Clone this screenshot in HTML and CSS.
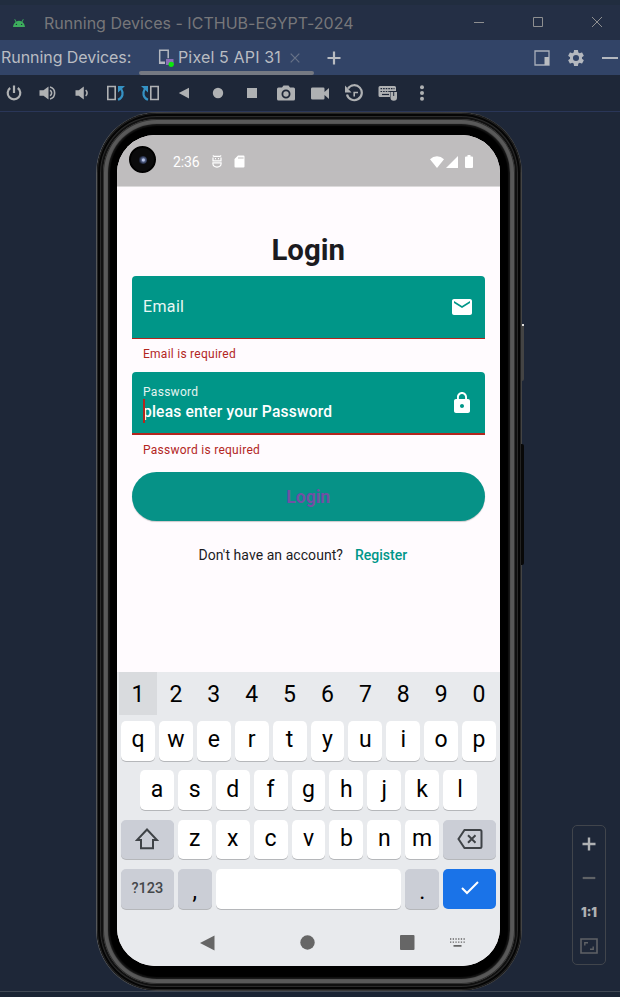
FILE: index.html
```html
<!DOCTYPE html>
<html lang="en">
<head>
<meta charset="utf-8">
<title>Running Devices</title>
<link rel="stylesheet" href="styles.css">
</head>
<body>
<div class="window">
  <header class="titlebar">
    <svg class="android" width="12" height="8" viewBox="0 0 12 8"><path fill="#3dae5d" d="M0 8C.2 5.700 1.200 4 2.600 3L1.300.5 2 .1l1.400 2.400a6 6 0 0 1 5.200 0L10 .1l.7.4L9.400 3C10.800 4 11.800 5.700 12 8z"/><circle cx="3.400" cy="5.400" r=".7" fill="#242f45"/><circle cx="8.600" cy="5.400" r=".7" fill="#242f45"/></svg>
    <span class="title">Running Devices - ICTHUB-EGYPT-2024</span>
    <div class="winbtns">
      <svg width="12" height="12" viewBox="0 0 12 12"><path d="M1 6.500h10"/></svg>
      <svg width="12" height="12" viewBox="0 0 12 12"><path d="M1.500 1.500h9v9h-9z"/></svg>
      <svg width="12" height="12" viewBox="0 0 12 12"><path d="M1 1l10 10M11 1L1 11"/></svg>
    </div>
  </header>

  <nav class="tabs">
    <span class="tabs-label">Running Devices:</span>
    <div class="tab">
      <svg width="16" height="18" viewBox="0 0 16 18"><path fill="none" stroke="#b4b8c0" stroke-width="1.500" d="M7 14.200H1.700V1.200h8.500v8"/><path fill="#b4b8c0" d="M1 12.500h6V15H1z"/><path fill="#8a6fb5" d="M8 10h7.500v6H8z"/><circle cx="13.200" cy="15.300" r="2.600" fill="#0be80b"/></svg>
      <span class="tab-name">Pixel 5 API 31</span>
      <svg class="tab-x" width="10" height="10" viewBox="0 0 10 10"><path d="M.7.7l8.600 8.600M9.300.7L.7 9.300"/></svg>
    </div>
    <svg class="plus" width="14" height="14" viewBox="0 0 14 14"><path d="M7 .5v13M.5 7h13"/></svg>
    <div class="tab-tools">
      <svg width="16" height="16" viewBox="0 0 16 16"><path fill="none" stroke="#a9afba" stroke-width="1.300" d="M1 1h14v14H1z"/><path fill="#b9bcc1" d="M10.500 7H15v8h-4.500z"/></svg>
      <svg width="16" height="16" viewBox="2 2 20 20"><path fill="#b4b8bf" d="M19.430 12.980c.04-.32.070-.64.070-.98s-.03-.66-.07-.98l2.110-1.650c.19-.15.240-.42.120-.64l-2-3.460c-.12-.22-.39-.3-.61-.22l-2.490 1c-.52-.4-1.080-.73-1.690-.98l-.38-2.650A.49.490 0 0 0 14 2h-4c-.25 0-.46.180-.49.420l-.38 2.650c-.61.250-1.170.590-1.690.98l-2.490-1c-.23-.09-.49 0-.61.220l-2 3.460c-.13.220-.07.490.120.640l2.110 1.650c-.04.320-.07.650-.07.980s.03.660.070.980l-2.110 1.650c-.19.150-.24.420-.12.640l2 3.460c.12.220.39.300.61.220l2.490-1c.52.400 1.080.730 1.690.980l.38 2.650c.03.240.24.420.49.420h4c.25 0 .46-.18.490-.42l.38-2.650c.61-.25 1.170-.59 1.690-.98l2.490 1c.23.090.49 0 .61-.22l2-3.460c.12-.22.070-.49-.12-.64zM12 15.800a3.800 3.800 0 1 1 0-7.600 3.800 3.800 0 0 1 0 7.600z"/></svg>
      <svg width="16" height="16" viewBox="0 0 16 16"><path stroke="#b4b8bf" stroke-width="2" d="M0 8h16"/></svg>
    </div>
  </nav>

  <div class="toolbar">
    <i><svg width="18" height="18" viewBox="0 0 18 18"><path class="ln" d="M9 1.500v7.500M5.200 4A6.300 6.300 0 1 0 12.800 4"/></svg></i>
    <i><svg width="18" height="18" viewBox="0 0 18 18"><path class="fl" d="M.5 6.200H4.500L9.500 2.500v13L4.500 11.800h-4z"/><path class="ln th" d="M11 6.200a3.200 3.200 0 0 1 0 5.600M11 3a6.200 6.200 0 0 1 0 12"/></svg></i>
    <i><svg width="18" height="18" viewBox="0 0 18 18"><path class="fl" d="M2.500 6.200h3.300l5-3.700v13l-5-3.700H2.500z"/><path class="ln th" d="M12.600 6.200a3.400 3.400 0 0 1 0 5.600"/></svg></i>
    <i><svg width="18" height="18" viewBox="0 0 18 18"><path class="ln th" d="M.8 2.500h7.400v13H.8z"/><path class="ln blue" d="M11 15.700c5.300-2 5.500-7 3-11.200"/><path fill="#3592c4" d="M11 2h7l-7 6.500z"/></svg></i>
    <i><svg width="18" height="18" viewBox="0 0 18 18"><path class="ln th" d="M9.800 2.500h7.400v13H9.800z"/><path class="ln blue" d="M7 15.700c-5.300-2-5.500-7-3-11.200"/><path fill="#3592c4" d="M7 2H0l7 6.500z"/></svg></i>
    <i><svg width="18" height="18" viewBox="0 0 18 18"><path class="fl" d="M14 3.800v10.600L3.800 9.100z"/></svg></i>
    <i><svg width="18" height="18" viewBox="0 0 18 18"><circle class="fl" cx="9" cy="9" r="5.200"/></svg></i>
    <i><svg width="18" height="18" viewBox="0 0 18 18"><path class="fl" d="M4 4h10v10H4z"/></svg></i>
    <i><svg width="18" height="18" viewBox="0 0 18 18"><path class="fl" fill-rule="evenodd" d="M6.500 1.500h5L13 3.500h3.500a1.500 1.500 0 0 1 1.500 1.500v10a1.500 1.500 0 0 1-1.500 1.500h-15A1.500 1.500 0 0 1 0 15V5a1.500 1.500 0 0 1 1.500-1.500H5zM9 5.500a4.500 4.500 0 1 0 0 9 4.500 4.500 0 0 0 0-9z"/><circle class="fl" cx="9" cy="10" r="2.700"/></svg></i>
    <i><svg width="18" height="18" viewBox="0 0 18 18"><path class="fl" d="M1.500 3.500h10.800q1.200 0 1.200 1.200V8L18 4v11l-4.500-4v3.300q0 1.200-1.200 1.200H1.500q-1.500 0-1.500-1.200V4.700q0-1.200 1.500-1.200z"/></svg></i>
    <i><svg width="18" height="18" viewBox="0 0 18 18"><path class="ln" d="M3 4.600A7.500 7.500 0 1 1 2 10.500"/><path class="fl" d="M0 1.500v7h6.500z"/><path class="ln th" d="M9.200 12.500V8.500H13"/></svg></i>
    <i><svg width="20" height="18" viewBox="0 0 20 18"><path class="fl" d="M2 2h14.500q1.500 0 1.500 1.500V7h-6v6H2q-1.500 0-1.500-1.500v-8Q.5 2 2 2z"/><path stroke="#1e2738" stroke-width="1.200" stroke-dasharray="1.600 1" d="M2.500 4.700h14M2.500 7.500h10"/><path stroke="#1e2738" stroke-width="1.200" d="M4 10.500h7"/><path class="fl" d="M12.500 8h2.700v4h1V8H19v5.500a3.250 3.250 0 0 1-6.500 0z"/></svg></i>
    <i><svg width="18" height="18" viewBox="0 0 18 18"><circle class="fl" cx="9" cy="3.300" r="2"/><circle class="fl" cx="9" cy="9" r="2"/><circle class="fl" cx="9" cy="14.700" r="2"/></svg></i>
  </div>

  <main class="stage">
    <div class="phone">
      <div class="side power"></div>
      <div class="side volume"></div>
      <div class="rim"><div class="bezel">
      <div class="screen">
        <div class="status">
          <div class="camera"><b></b></div>
          <span class="clock">2:36</span>
          <svg class="debug" width="10" height="13" viewBox="0 0 10 13"><path fill="none" stroke="#fff" stroke-width="1.200" d="M.8.600l1.200.8h6l1.200-.8M1 2.500v3.300h8V2.500M3 3.700h1M6 3.700h1M.9 7.800h8.200v1Q8.800 12 5 12.200 1.200 12 .9 8.800z"/></svg>
          <svg class="sd" width="11" height="13" viewBox="0 0 11 13"><path fill="#fff" fill-rule="evenodd" d="M4 .5h5.500q1 0 1 1v10q0 1-1 1h-8q-1 0-1-1V4zM4.500 2v2h1V2zM6.500 2v2h1V2zM8.500 2v2h.8V2z"/></svg>
          <div class="signals">
            <svg width="14" height="12" viewBox="0 0 14 12"><path fill="#fff" d="M7 12L0 3.200Q3 .3 7 .3t7 2.900z"/></svg>
            <svg width="12" height="12" viewBox="0 0 12 12"><path fill="#fff" d="M12 0v12H0z"/></svg>
            <svg class="batt" width="8" height="13" viewBox="0 0 8 13"><path fill="#fff" d="M2.500 0h3v1.500H7q1 0 1 1V12q0 1-1 1H1q-1 0-1-1V2.500q0-1 1-1h1.500z"/></svg>
          </div>
        </div>

        <div class="app">
          <h1>Login</h1>
          <div class="field">
            <div class="field-text"><span class="hint">Email</span></div>
            <svg width="24" height="24" viewBox="0 0 24 24"><path fill="#fff" d="M20 4H4c-1.100 0-1.990.9-1.990 2L2 18c0 1.100.9 2 2 2h16c1.100 0 2-.9 2-2V6c0-1.100-.9-2-2-2zm0 4l-8 5-8-5V6l8 5 8-5v2z"/></svg>
          </div>
          <p class="error">Email is required</p>
          <div class="field focused">
            <div class="field-text"><span class="float">Password</span><span class="value">pleas enter your Password</span></div>
            <svg width="24" height="24" viewBox="0 0 24 24"><path fill="#fff" d="M18 8h-1V6c0-2.760-2.240-5-5-5S7 3.240 7 6v2H6c-1.100 0-2 .9-2 2v10c0 1.100.9 2 2 2h12c1.100 0 2-.9 2-2V10c0-1.100-.9-2-2-2zm-6 9c-1.100 0-2-.9-2-2s.9-2 2-2 2 .9 2 2-.9 2-2 2zm3.100-9H8.900V6c0-1.710 1.390-3.100 3.100-3.100s3.100 1.390 3.100 3.100v2z"/></svg>
          </div>
          <p class="error">Password is required</p>
          <div class="button">Login</div>
          <div class="signup"><span>Don't have an account?</span><strong>Register</strong></div>
        </div>

        <div class="keyboard">
          <div class="nums"><span class="held">1</span><span>2</span><span>3</span><span>4</span><span>5</span><span>6</span><span>7</span><span>8</span><span>9</span><span>0</span></div>
          <div class="keys">
            <kbd>q</kbd><kbd>w</kbd><kbd>e</kbd><kbd>r</kbd><kbd>t</kbd><kbd>y</kbd><kbd>u</kbd><kbd>i</kbd><kbd>o</kbd><kbd>p</kbd>
            <kbd class="indent">a</kbd><kbd>s</kbd><kbd>d</kbd><kbd>f</kbd><kbd>g</kbd><kbd>h</kbd><kbd>j</kbd><kbd>k</kbd><kbd>l</kbd>
            <kbd class="wide dim first"><svg width="24" height="22" viewBox="0 0 24 22"><path class="key-ln" d="M12 1.500L22 12h-4v8.200H6V12H2z"/></svg></kbd><kbd>z</kbd><kbd>x</kbd><kbd>c</kbd><kbd>v</kbd><kbd>b</kbd><kbd>n</kbd><kbd>m</kbd><kbd class="wide dim"><svg width="26" height="20" viewBox="0 0 26 20"><path class="key-ln" d="M7.500 1H23q1.500 0 1.500 1.500v15Q24.500 19 23 19H7.500L1.500 10zM11 6.200l7.500 7.600M18.500 6.200L11 13.800"/></svg></kbd>
            <kbd class="wide dim sym">?123</kbd><kbd class="dim punct">,</kbd><kbd class="space"></kbd><kbd class="dim punct">.</kbd><kbd class="wide enter"><svg width="18" height="14" viewBox="0 0 18 14"><path fill="none" stroke="#fff" stroke-width="2" d="M1 7l5 5L17 1"/></svg></kbd>
          </div>
          <div class="navbar">
            <svg width="15" height="16" viewBox="0 0 15 16"><path fill="#666" d="M14.500.5v15L0 8z"/></svg>
            <svg width="15" height="15" viewBox="0 0 15 15"><circle fill="#666" cx="7.500" cy="7.500" r="7.200"/></svg>
            <svg width="15" height="15" viewBox="0 0 15 15"><rect fill="#666" width="14.500" height="15" rx="1"/></svg>
            <svg class="ime" width="15" height="9" viewBox="0 0 15 9"><path stroke="#666" stroke-width="1.300" stroke-dasharray="1.300 1.400" d="M0 1h15M0 4.200h15"/><path stroke="#666" stroke-width="1.700" d="M3.500 7.800h8"/></svg>
          </div>
        </div>
      </div>
      </div></div>
    </div>

    <aside class="zoom">
      <svg width="14" height="14" viewBox="0 0 14 14"><path stroke="#afb1b3" stroke-width="2.400" d="M7 .5v13M.5 7h13"/></svg>
      <svg width="14" height="14" viewBox="0 0 14 14"><path stroke="#5f6266" stroke-width="2.200" d="M.7 7h12.600"/></svg>
      <span>1:1</span>
      <svg width="18" height="16" viewBox="0 0 18 16"><path fill="none" stroke="#5f6266" stroke-width="1.600" d="M1 1h16v14H1z"/><path fill="none" stroke="#5f6266" stroke-width="1.400" d="M4.800 7.500V4.700H8M13.200 8.500v2.800H10"/></svg>
    </aside>
  </main>
  <footer></footer>
</div>
</body>
</html>
```
FILE: styles.css
```css
* { box-sizing: border-box; }
body { margin: 0; background: #1e2738; }
svg { display: block; flex: none; }
.window { width: 620px; height: 997px; overflow: hidden; display: flex; flex-direction: column; font-family: Inter, sans-serif; }

.titlebar { height: 40px; flex: none; display: flex; align-items: center; padding: 6px 17px 0 13px; background: linear-gradient(#212d3f 5px, #242f45 5px); color: #77777a; }
.title { font-size: 16px; letter-spacing: .02px; margin-left: 19px; white-space: nowrap; }
.winbtns { margin-left: auto; display: flex; gap: 47px; padding-bottom: 2px; }
.winbtns path { fill: none; stroke: #8e8f90; stroke-width: 1; }

.tabs { height: 35px; flex: none; display: flex; background: #324467; color: #b9bcc2; font-size: 16px; align-items: center; padding-right: 3px; }
.tabs-label { width: 139px; padding: 0 0 1px 1px; letter-spacing: -.06px; white-space: nowrap; }
.tab { position: relative; width: 175px; height: 35px; display: flex; align-items: center; padding-left: 19px; }
.tab::after { content: ""; position: absolute; left: 0; right: 0; bottom: 0; height: 4px; border-radius: 2px; background: #757982; }
.tab-name { margin-left: 4px; padding-bottom: 1px; letter-spacing: .15px; white-space: nowrap; }
.tab-x { margin-left: auto; margin-right: 14px; }
.tab-x path { stroke: #687388; stroke-width: 1.200; }
.plus { margin-left: 13px; }
.plus path { stroke: #b9bcc1; stroke-width: 2.200; }
.tab-tools { margin-left: auto; display: flex; gap: 18px; margin-right: -1px; }

.toolbar { height: 36px; flex: none; display: flex; margin-left: -3px; }
.toolbar i { width: 34px; display: flex; align-items: center; justify-content: center; }
.fl { fill: #afb1b3; }
.ln { fill: none; stroke: #afb1b3; stroke-width: 2.200; }
.th { stroke-width: 1.600; }
.blue { stroke: #3592c4; }

.stage { flex: none; height: 880px; border-top: 1px solid #2a3658; display: flex; padding-left: 96px; }
footer { height: 6px; border-top: 1px solid #414954; background: #1b2534; }

.phone { position: relative; width: 426px; height: 879px; padding: 1px; border-radius: 61px; background: linear-gradient(90deg, #55575a, #3a3a3a 20%, #3a3a3a 80%, #444); }
.rim { height: 877px; padding: 6px; border-radius: 60px; background: #111; box-shadow: inset 0 0 0 1px #232323, inset 0 0 0 3px #050505, inset 0 0 0 4px #2b2b2b, inset 0 0 0 6px #101010; }
.bezel { height: 865px; border-radius: 54px; padding: 16px 14px 17px; background: #000; box-shadow: inset 0 0 0 1px #303030, inset 0 0 1px 5px #595959, inset 0 0 1px 7px #111; }
.side { position: absolute; left: 425px; width: 3px; border-radius: 0 2px 2px 0; }
.power { top: 212px; height: 57px; background: #444; }
.power::before { content: ""; display: block; width: 2px; height: 2px; margin-left: 1px; background: #ddd; }
.volume { top: 332px; height: 121px; background: #080808; }
.screen { width: 383px; height: 831px; border-radius: 38px; overflow: hidden; background: #fffbfe; display: flex; flex-direction: column; font-family: Roboto, sans-serif; }

.status { height: 52px; flex: none; background: #bfbdbe; border-bottom: 1px solid #dcdadb; display: flex; align-items: center; color: #fff; padding: 2px 27px 0 12px; }
.camera { width: 27px; height: 27px; border-radius: 50%; background: #0b0b0c; border: 2px solid #000; display: flex; align-items: center; justify-content: center; margin-top: -4px; }
.camera b { width: 8px; height: 8px; border-radius: 50%; background: radial-gradient(circle at 55% 50%, #b9c5e8 0 1px, #56648b 2px, #1c2338 4px); }
.clock { font-size: 14px; margin-left: 17px; width: 27px; letter-spacing: -.1px; }
.debug { margin-left: 12px; }
.sd { margin-left: 12px; }
.signals { margin-left: auto; display: flex; align-items: center; gap: 1.500px; }
.batt { margin-left: 6px; }

.app { height: 485px; flex: none; padding: 44px 15px 0 14.500px; }
h1 { margin: 0; font-size: 29.400px; line-height: 38px; height: 45px; font-weight: 700; text-align: center; color: #1c1b1f; }
.field { height: 63px; background: #009688; border-bottom: 1px solid #b3261e; border-radius: 4px 4px 0 0; display: flex; align-items: center; justify-content: space-between; padding: 0 11.500px; color: #fff; }
.focused { border-bottom-width: 2px; }
.field-text { display: flex; flex-direction: column; }
.hint { font-size: 16px; letter-spacing: .35px; color: #e9f6f4; padding-bottom: 1px; }
.focused .field-text { padding-top: 2px; }
.float { font-size: 12px; line-height: 16px; letter-spacing: .3px; color: #e4f4f2; }
.value { position: relative; font-size: 15.600px; line-height: 24px; font-weight: 500; letter-spacing: .18px; }
.value::before { content: ""; position: absolute; left: 0; top: -1px; width: 2px; height: 24px; background: #b3261e; }
.error { margin: 0; height: 33px; padding: 8px 0 0 11.500px; font-size: 12px; line-height: 14px; letter-spacing: .26px; color: #b3261e; }
.button { height: 49px; margin-top: 4px; border-radius: 25px; background: #069287; color: #7150a4; font-size: 17.500px; font-weight: 700; display: flex; align-items: center; justify-content: center; box-shadow: 0 1px 1px #0003; }
.signup { display: flex; padding: 26px 0 0 67px; font-size: 14px; line-height: 16px; color: #1c1b1f; letter-spacing: .06px; white-space: nowrap; }
.signup strong { margin-left: 12px; color: #009688; font-weight: 500; letter-spacing: 0; }

.keyboard { flex: 1; background: #e8eaed; color: #000; padding: 0 2px; }
.nums { display: grid; grid-template-columns: repeat(10, 1fr); height: 43px; line-height: 45px; text-align: center; font-size: 23px; }
.held { background: #d9dbde; height: 43px; overflow: hidden; }
.keys { display: grid; grid-template-columns: repeat(20, 1fr); grid-auto-rows: 39.700px; row-gap: 9.600px; padding-top: 6px; }
kbd { grid-column: span 2; margin: 0 2px; border-radius: 5px; background: #fff; box-shadow: 0 1px 0 #b5b7ba; font: 23px/38px Roboto, sans-serif; text-align: center; display: flex; align-items: center; justify-content: center; padding-bottom: 1px; }
.indent { grid-column: 2 / span 2; }
.wide { grid-column: span 3; }
.first { grid-column: 1 / span 3; }
.dim { background: #cbced6; }
.space { grid-column: span 10; }
.enter { background: #1a73e8; box-shadow: none; }
.sym { font-size: 14.500px; font-weight: 500; color: #44474a; padding: 1px 0 0; }
.punct { padding: 6px 0 0; }
.key-ln { fill: none; stroke: #3f4347; stroke-width: 2; }
.navbar { display: flex; align-items: center; height: 68px; padding-left: 81px; }
.navbar svg { margin-right: 85px; }
.navbar svg:nth-child(3) { margin-right: 35px; }
.navbar .ime { margin-right: 0; }

.zoom { width: 34px; height: 140px; margin: 713px 0 0 50px; border: 1px solid #41454c; border-radius: 5px; display: flex; flex-direction: column; align-items: center; justify-content: space-between; padding: 11px 0 10px; }
.zoom span { font-size: 12.500px; line-height: 14px; font-weight: 900; color: #afb1b3; padding-top: 2px; margin-bottom: -2px; }
```
